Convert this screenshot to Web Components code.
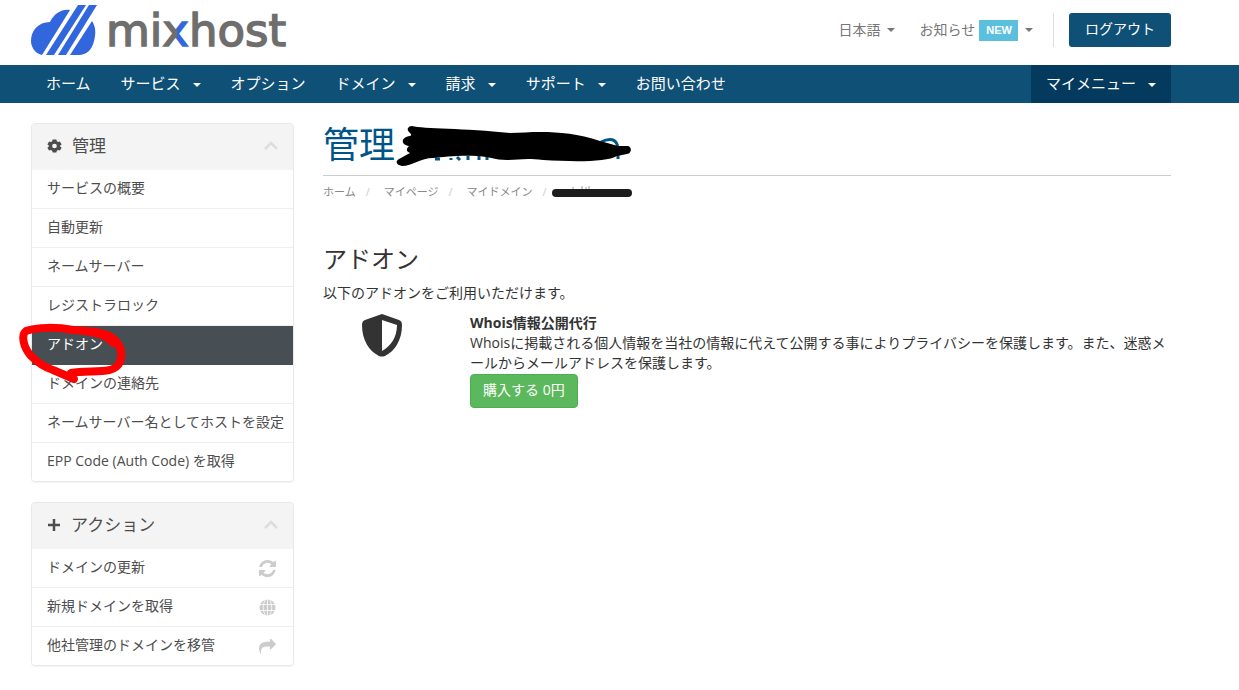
<!DOCTYPE html>
<html lang="ja">
<head>
<meta charset="utf-8">
<title>mixhost - アドオン</title>
<style>
html,body{margin:0}
body{background:#fff;color:#333;font:14px/20px "Open Sans","Noto Sans CJK JP",sans-serif;--brand:#0f5077;--ink:#4d4d4d}
</style>
</head>
<body>
<mh-page></mh-page>
<script>
const define=(name,html)=>customElements.define(name,class extends HTMLElement{
  constructor(){super();const t=document.createElement('template');t.innerHTML=html;this.attachShadow({mode:'open'}).append(t.content.cloneNode(true));}
  connectedCallback(){
    const link=this.shadowRoot.querySelector('a[data-host]');
    if(link){link.setAttribute('href',this.getAttribute('href')||'#');if(this.hasAttribute('active'))link.setAttribute('aria-current','page');}
  }
});

define('mh-logo',`<style>
:host{display:block;width:260px;height:56px}svg{display:block}a{display:block}
</style><a href="#" aria-label="mixhost"><svg width="260" height="56" viewBox="0 0 260 56">
<defs><linearGradient id="x" gradientUnits="userSpaceOnUse" x1="0" x2="260" y1="0" y2="0"><stop offset=".562" stop-color="#6e6e6e"/><stop offset=".562" stop-color="#3166dd"/><stop offset=".615" stop-color="#3166dd"/><stop offset=".615" stop-color="#6e6e6e"/></linearGradient></defs>
<g fill="#3166dd"><path d="M39 10L11 55C3 53 0 46 0 41C0 31 7 22 19 22C23 14 30 9 39 10Z"/><path d="M47 5H55L23 55H15Z"/><path d="M58 5H66L35 55H27Z"/><path d="M61 21C65 27 65 34 63 41C61 50 55 55 48 55H39Z"/></g>
<text x="75" y="46" font-family="DejaVu Sans" font-size="45" fill="url(#x)" stroke="url(#x)" stroke-width="1.5">mixhost</text>
</svg></a>`);

define('mh-caret',`<style>
:host{display:inline-block;width:0;height:0;border:4px solid transparent;border-top-color:currentColor;border-bottom:0;vertical-align:middle}
</style>`);

define('mh-topbar',`<style>
:host{display:flex;justify-content:space-between;height:65px;padding:0 68px 0 31px;box-sizing:border-box}
nav{display:flex;align-items:center;height:34px;margin-top:13px;color:#777}
nav a{color:inherit;text-decoration:none;display:flex;align-items:center}
.lang{gap:6px;margin-right:25px}.news{gap:4px}.news mh-caret{margin-left:3px}
.new{background:#5bc0de;color:#fff;font:bold 11px/21px "Liberation Sans",sans-serif;padding:0 6px 0 7px}
.rule{width:1px;height:34px;background:#ddd;margin:0 15px 0 20px}
button{font:inherit;background:var(--brand);color:#fff;border:0;border-radius:3px;height:34px;width:102px;padding:0 0 2px}
</style><mh-logo></mh-logo><nav aria-label="アカウント"><a class="lang" href="#">日本語<mh-caret></mh-caret></a><a class="news" href="#">お知らせ<span class="new">NEW</span><mh-caret></mh-caret></a><span class="rule"></span><button type="button">ログアウト</button></nav>`);

define('mh-navlink',`<style>
:host{display:block}a{display:flex;align-items:center;gap:12px;padding:0 15px;height:36px;color:#fff;text-decoration:none;font-size:15px}
mh-caret{display:none}:host([menu]) mh-caret{display:block;margin-top:4px}
:host([account]){margin-left:auto;background:#043a5d;height:38px}
</style><a data-host><slot></slot><mh-caret></mh-caret></a>`);

define('mh-navbar',`<style>
:host{display:block;background:var(--brand);padding:0 68px 0 31px}nav{display:flex;height:38px}
</style><nav aria-label="メイン"><mh-navlink>ホーム</mh-navlink><mh-navlink menu>サービス</mh-navlink><mh-navlink>オプション</mh-navlink><mh-navlink menu>ドメイン</mh-navlink><mh-navlink menu>請求</mh-navlink><mh-navlink menu>サポート</mh-navlink><mh-navlink>お問い合わせ</mh-navlink><mh-navlink menu account>マイメニュー</mh-navlink></nav>`);

define('mh-panel',`<style>
:host{display:block;border:1px solid #e8e8e8;border-radius:4px;box-shadow:0 1px 1px #0000000d;overflow:hidden}
header{display:flex;align-items:center;box-sizing:border-box;height:46px;padding:0 15px 2px;background:#f4f4f4;color:var(--ink)}
h2{font-size:17px;font-weight:400;margin:0 auto 0 10px;line-height:24px}
button{border:0;background:none;padding:0;display:flex}
</style><header><slot name="icon"></slot><h2><slot name="title"></slot></h2><button type="button" aria-label="折りたたむ"><svg width="14" height="10" viewBox="0 0 14 10"><path d="M1 8L7 2L13 8" fill="none" stroke="#ddd" stroke-width="2.500"/></svg></button></header><slot></slot>`);

define('mh-item',`<style>
:host{display:block;background:#fff}
:host(:not(:last-child)){border-bottom:1px solid #eee}
a{display:flex;justify-content:space-between;align-items:center;box-sizing:border-box;height:38px;padding:0 17px 2px 15px;color:var(--ink);text-decoration:none;white-space:nowrap}
:host([active]){background:#474f54;border-color:#474f54}:host([active]) a{color:#fff}
::slotted(svg){display:block;margin-top:2px}
</style><a data-host><span><slot></slot></span><slot name="icon"></slot></a>`);

define('mh-sidebar',`<style>
:host{display:grid;gap:20px;align-content:start;position:relative}
svg{display:block}.mark{position:absolute;left:-16px;top:195px;pointer-events:none}
</style>
<mh-panel><svg slot="icon" width="15" height="16" viewBox="0 0 16 16"><path fill="#4d4d4d" fill-rule="evenodd" d="M6 1h4l.5 2 1.3.8 2-.7 1.8 3.2L14 7.500v1l1.600 1.300-1.800 3.100-2-.6-1.300.8L10 15H6l-.5-1.900-1.300-.8-2 .6L.4 9.800 2 8.500v-1L.4 6.300l1.800-3.200 2 .7L5.500 3zM8 5.500a2.500 2.500 0 100 5 2.500 2.500 0 000-5z"/></svg><span slot="title">管理</span>
<mh-item>サービスの概要</mh-item><mh-item>自動更新</mh-item><mh-item>ネームサーバー</mh-item><mh-item>レジストラロック</mh-item><mh-item active>アドオン</mh-item><mh-item>ドメインの連絡先</mh-item><mh-item>ネームサーバー名としてホストを設定</mh-item><mh-item>EPP Code (Auth Code) を取得</mh-item></mh-panel>
<mh-panel><svg slot="icon" width="14" height="14" viewBox="0 0 14 14"><path stroke="#4d4d4d" stroke-width="2.500" d="M7 1v12M1 7h12"/></svg><span slot="title">アクション</span>
<mh-item>ドメインの更新<svg slot="icon" width="17" height="17" viewBox="0 0 1536 1536"><path fill="#ccc" d="M1511 928q0 5-1 7-64 268-268 434.500T764 1536q-146 0-282.500-55T238 1324l-129 129q-19 19-45 19t-45-19-19-45V960q0-26 19-45t45-19h448q26 0 45 19t19 45-19 45l-137 137q71 66 161 102t187 36q134 0 250-65t186-179q11-17 53-117 8-23 30-23h192q13 0 22.500 9.500t9.500 22.500zm25-800v448q0 26-19 45t-45 19h-448q-26 0-45-19t-19-45 19-45l138-138Q969 256 768 256q-134 0-250 65T332 500q-11 17-53 117-8 23-30 23H50q-13 0-22.500-9.500T18 608v-7q65-268 270-434.500T768 0q146 0 284 55.500T1297 212l130-129q19-19 45-19t45 19 19 45z"/></svg></mh-item>
<mh-item>新規ドメインを取得<svg slot="icon" width="17" height="17" viewBox="0 0 17 17"><circle cx="8.500" cy="8.500" r="8" fill="#ccc"/><path d="M8.500 0v17M0 5.500h17M0 11.500h17M6.500 0Q2 8.500 6.500 17M10.500 0Q15 8.500 10.500 17" fill="none" stroke="#fff" stroke-width=".8"/></svg></mh-item>
<mh-item>他社管理のドメインを移管<svg slot="icon" width="17" height="15" viewBox="0 0 1792 1536"><path fill="#ccc" d="M1792 512q0 26-19 45l-512 512q-19 19-45 19t-45-19-19-45V768H928q-98 0-175.500 6t-154 21.500-133 42.500-105.500 69.500-80 101-48.500 138.500T214 1328q0 55 5 123 0 6 2.500 23.500t2.500 26.500q0 15-8.500 25t-23.500 10q-16 0-28-17-7-9-13-22t-13.500-30-10.500-24Q0 1158 0 992q0-199 53-333Q215 256 928 256h224V0q0-26 19-45t45-19 45 19l512 512q19 19 19 45z"/></svg></mh-item></mh-panel>
<svg class="mark" width="120" height="70" viewBox="0 0 120 70" aria-hidden="true"><path d="M98 25C92 15 74 13 58 12C42 9 22 9 11 13C6 17 8 29 16 38C22 44 28 49 38 52L59 61L56 55C75 51 99 58 105 44C109 32 103 22 92 17C84 14 76 13 68 13" fill="none" stroke="red" stroke-width="8" stroke-linecap="round" stroke-linejoin="round"/></svg>`);

define('mh-heading',`<style>
:host{display:block}
h1{position:relative;margin:0;color:#058;font-size:36px;line-height:44px;font-weight:400;padding-bottom:8px;border-bottom:1px solid #ccc}
ol{display:flex;list-style:none;margin:6px 0 0;padding:0;font-size:11px;line-height:20px;position:relative}
a{color:#888;text-decoration:none}li+li::before{content:"/";color:#ccc;margin:0 14px 0 10px}
.title{position:absolute;left:72px;top:2px}.crumb{position:absolute;left:228px;top:3px}
</style><h1>管理<svg class="title" width="240" height="44" viewBox="0 0 240 44" aria-hidden="true"><path d="M206 17Q220 10 223 22V34M40 34h5M56 33v2M62 32l3 3M73 31v4M84 31v4M92 31v4" fill="none" stroke="#058" stroke-width="3"/><path d="M17 1C28 4 70 3 115 8C140 7 170 4 205 16L223 21H233C237 22 237 28 232 29L222 31C212 37 180 37 148 35C130 33 124 35 112 35C100 35 92 31 82 31C65 30 48 32 38 33C26 33 17 41 7 41C1 40 0 36 4 34L15 28C11 26 11 24 14 21C5 20 6 12 15 11C19 9 11 7 13 3Q14 1 17 1Z" fill="#000"/></svg></h1>
<ol><li><a href="#">ホーム</a></li><li><a href="#">マイページ</a></li><li><a href="#">マイドメイン</a></li><li><svg class="crumb" width="82" height="12" viewBox="0 0 82 12" aria-hidden="true"><path d="M22 2v2M31 1v3M35 2v2M38 1v3" stroke="#999"/><path d="M5 8H77" stroke="#1d1d1d" stroke-width="8" stroke-linecap="round"/></svg></li></ol>`);

define('mh-addon',`<style>
:host{display:grid;grid-template-columns:117px 1fr;gap:30px}
.icon{display:flex;justify-content:center;align-items:flex-start;padding-top:1px}
strong,p{display:block;margin:0}button{font:inherit;color:#fff;background:#5cb85c;border:1px solid #4cae4c;border-radius:4px;height:34px;padding:0 12px 2px;display:block;margin-top:1px}
</style><div class="icon"><svg width="40" height="43" viewBox="0 0 40 43" aria-hidden="true"><path fill="#333" fill-rule="evenodd" d="M20 0L37 6Q40 7 40 11C40 26 33 37 23 42Q20 43 17 42C7 37 0 26 0 11Q0 7 3 6ZM20 6V37C29 32 35 23 35 11Z"/></svg></div><div><strong><slot name="name"></slot></strong><p><slot></slot></p><button type="button"><slot name="action"></slot></button></div>`);

define('mh-page',`<style>
:host{display:block}main{display:grid;grid-template-columns:263px minmax(0,1fr);gap:29px;padding:20px 68px 24px 31px}
h2{font-size:24px;line-height:30px;font-weight:400;margin:42px 0 9px}.lead{margin:0 0 10px}
</style><mh-topbar></mh-topbar><mh-navbar></mh-navbar><main><mh-sidebar></mh-sidebar><section><mh-heading></mh-heading><h2>アドオン</h2><p class="lead">以下のアドオンをご利用いただけます。</p><mh-addon><span slot="name">Whois情報公開代行</span>Whoisに掲載される個人情報を当社の情報に代えて公開する事によりプライバシーを保護します。また、迷惑メールからメールアドレスを保護します。<span slot="action">購入する 0円</span></mh-addon></section></main>`);
</script>
</body>
</html>
